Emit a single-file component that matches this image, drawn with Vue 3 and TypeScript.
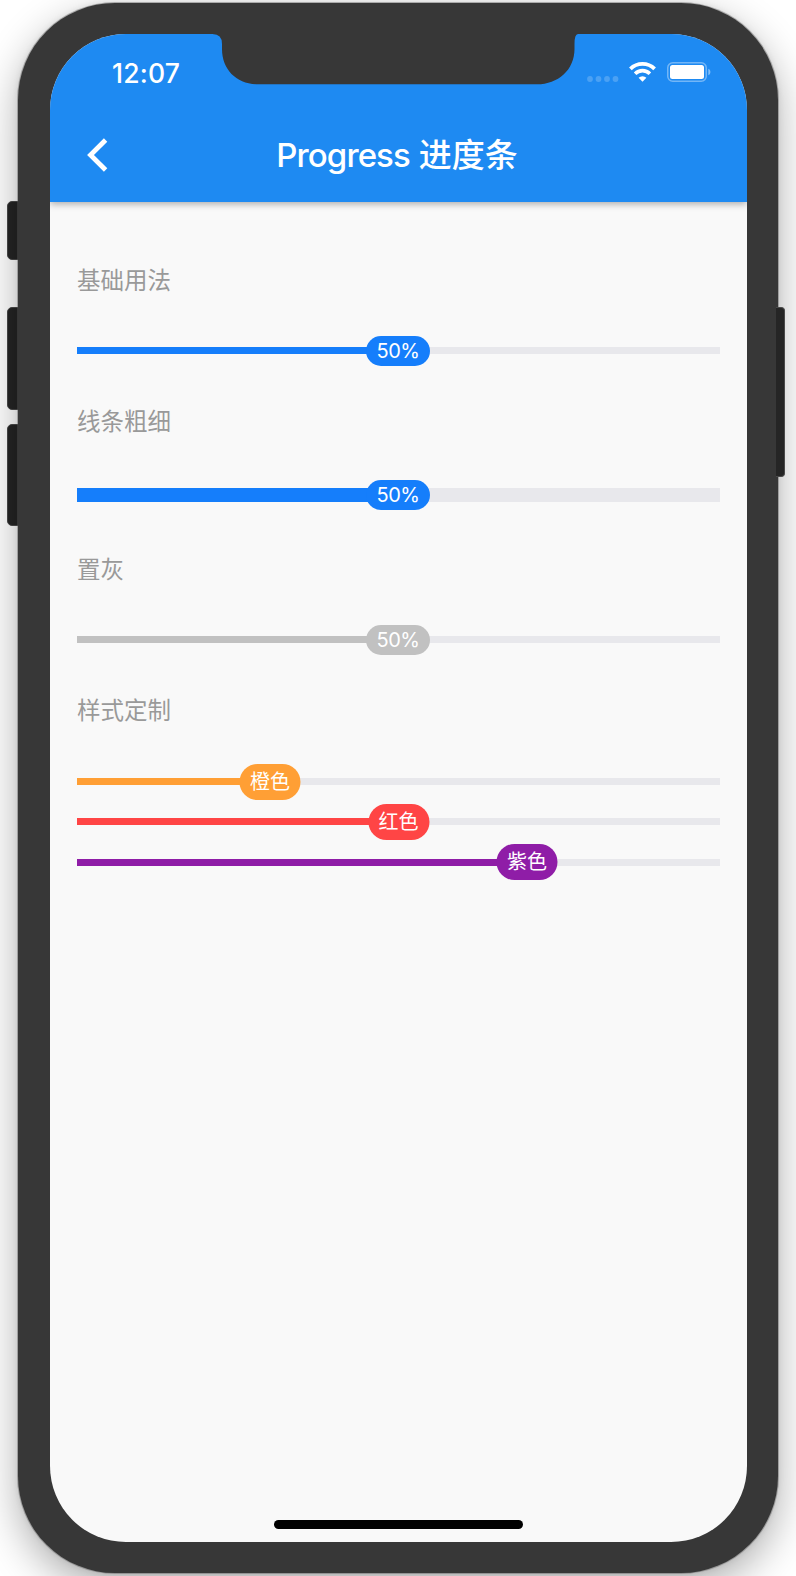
<script setup lang="ts">
interface Bar {
  percent: number
  label: string
  color: string
}

interface Section {
  title: string
  thickness: number
  bars: Bar[]
}

const sections: Section[] = [
  { title: '基础用法', thickness: 7, bars: [{ percent: 50, label: '50%', color: '#157efb' }] },
  { title: '线条粗细', thickness: 14, bars: [{ percent: 50, label: '50%', color: '#157efb' }] },
  { title: '置灰', thickness: 7, bars: [{ percent: 50, label: '50%', color: '#c1c1c1' }] },
  {
    title: '样式定制',
    thickness: 7,
    bars: [
      { percent: 30, label: '橙色', color: '#ff9f35' },
      { percent: 50, label: '红色', color: '#ff4545' },
      { percent: 70, label: '紫色', color: '#8f1da7' },
    ],
  },
]

const isNumeric = (label: string): boolean => label.endsWith('%')
</script>

<template>
  <main class="stage">
    <i class="key mute"></i>
    <i class="key up"></i>
    <i class="key down"></i>
    <div class="phone">
      <div class="screen">
        <header class="header">
          <div class="status">
            <span class="time">12:07</span>
            <div class="indicators">
              <svg class="dots" width="32" height="20" viewBox="0 0 32 20" fill="#fff" fill-opacity=".2">
                <circle cx="3" cy="17" r="2.9" />
                <circle cx="11.5" cy="17" r="2.9" />
                <circle cx="20" cy="17" r="2.9" />
                <circle cx="28.5" cy="17" r="2.9" />
              </svg>
              <svg class="wifi" width="27" height="20" viewBox="0 0 27 20" fill="none" stroke="#fff">
                <path d="M1.4 6.9a17.2 17.2 0 0 1 24.2 0" stroke-width="3.8" />
                <path d="M6.1 11.7a10.5 10.5 0 0 1 14.8 0" stroke-width="3.6" />
                <path d="M13.5 19.8l-3.9-4a5.6 5.6 0 0 1 7.8 0z" fill="#fff" stroke="none" />
              </svg>
              <svg class="battery" width="44" height="20" viewBox="0 0 44 20">
                <rect x=".75" y=".75" width="38.5" height="18.5" rx="5" fill="none" stroke="#fff" stroke-opacity=".38" stroke-width="1.5" />
                <rect x="3" y="3" width="34" height="14" rx="2.5" fill="#fff" />
                <path d="M41.3 6.8c2.8 1 2.8 5.4 0 6.4z" fill="#fff" fill-opacity=".45" />
              </svg>
            </div>
          </div>
          <div class="nav">
            <svg class="back" width="21" height="34" viewBox="0 0 21 34" fill="none" stroke="#fff" stroke-width="4.8">
              <path d="M18.6 2L3.5 17l15.1 15" />
            </svg>
            <h1 class="title"><span class="latin">Progress</span> 进度条</h1>
          </div>
        </header>
        <section v-for="section in sections" :key="section.title" class="section">
          <h2 class="heading">{{ section.title }}</h2>
          <div class="bars">
            <div
              v-for="bar in section.bars"
              :key="bar.label"
              class="track"
              :style="{ height: section.thickness + 'px' }"
            >
              <div class="fill" :style="{ width: bar.percent + '%', background: bar.color }"></div>
              <span
                class="badge"
                :class="{ numeric: isNumeric(bar.label) }"
                :style="{ left: bar.percent + '%', background: bar.color }"
              >{{ bar.label }}</span>
            </div>
          </div>
        </section>
        <svg class="notch" width="370" height="51" viewBox="0 0 370 51" fill="#373737">
          <path d="M0 0H4.5Q14 0 14 10V15C14 36 29 50.3 50 50.3H329C350 50.3 366.5 36 366.5 15V10Q366.5 0 370 0Z" />
        </svg>
        <div class="home"></div>
      </div>
    </div>
    <i class="key power"></i>
  </main>
</template>

<style>
body {
  margin: 0;
}
</style>

<style scoped>
.stage {
  position: relative;
  box-sizing: border-box;
  width: 796px;
  height: 1576px;
  padding: 3px 18px;
  overflow: hidden;
  background: #fff;
  font-family: Inter, "Noto Sans CJK SC", sans-serif;
}

.phone {
  position: relative;
  box-sizing: border-box;
  height: 1570px;
  padding: 31px 31px 31px 32px;
  border-radius: 97px;
  background: #373737;
  box-shadow: 0 0 0 1px rgba(90, 90, 90, 0.4), 0 0 6px rgba(0, 0, 0, 0.1), 0 14px 42px rgba(0, 0, 0, 0.32);
}

.key {
  position: absolute;
  left: 7px;
  box-sizing: border-box;
  width: 16px;
  border: 1.5px solid #4a4a4a;
  border-radius: 5px;
  background: #252525;
}

.mute { top: 201px; height: 59px; }
.up { top: 307px; height: 103px; }
.down { top: 424px; height: 102px; }
.power { left: 776px; top: 307px; width: 9px; height: 170px; border-left: 0; border-radius: 0 4px 4px 0; }

.screen {
  position: relative;
  height: 1508px;
  overflow: hidden;
  border-radius: 76px;
  background: #f9f9f9;
}

.header {
  height: 168px;
  margin-bottom: 62px;
  background: #1e8af2;
  box-shadow: 0 2px 7px rgba(0, 0, 0, 0.32);
  color: #fff;
}

.status {
  display: flex;
  justify-content: space-between;
  align-items: center;
  height: 76px;
  padding: 0 36px 0 62px;
}

.time {
  padding-top: 1px;
  font-size: 26.5px;
  font-weight: 550;
  line-height: 32px;
  letter-spacing: 0.2px;
}

.indicators {
  display: flex;
  align-items: center;
}

.wifi { margin-left: 10px; }
.battery { margin-left: 11px; }

.nav {
  position: relative;
  display: flex;
  align-items: center;
  justify-content: center;
  height: 90px;
}

.back {
  position: absolute;
  left: 37px;
  top: 28px;
}

.title {
  margin: 0 3px 0 0;
  font-size: 33px;
  font-weight: 500;
  line-height: 40px;
  white-space: nowrap;
}

.latin {
  letter-spacing: -0.9px;
}

.section {
  padding: 0 27px 51px;
}

.heading {
  margin: 0 0 49px;
  color: #999;
  font-size: 23.5px;
  font-weight: 400;
  line-height: 34px;
}

.section:last-of-type .heading {
  margin-bottom: 50px;
}

.bars {
  display: flex;
  flex-direction: column;
  gap: 33.3px;
}

.track {
  position: relative;
  background: #e8e8ec;
}

.fill {
  height: 100%;
}

.badge {
  position: absolute;
  top: 50%;
  box-sizing: border-box;
  width: 61px;
  height: 36px;
  border-radius: 18px;
  color: #fff;
  font-size: 20px;
  line-height: 37px;
  text-align: center;
  white-space: nowrap;
  transform: translate(-50%, -50%);
}

.badge.numeric {
  width: 64px;
  height: 30px;
  margin-left: -0.5px;
  border-radius: 15px;
  line-height: 30px;
  letter-spacing: -0.4px;
}

.notch {
  position: absolute;
  left: 158px;
  top: 0;
}

.home {
  position: absolute;
  left: 224px;
  bottom: 13px;
  width: 249px;
  height: 9px;
  border-radius: 5px;
  background: #000;
}
</style>
